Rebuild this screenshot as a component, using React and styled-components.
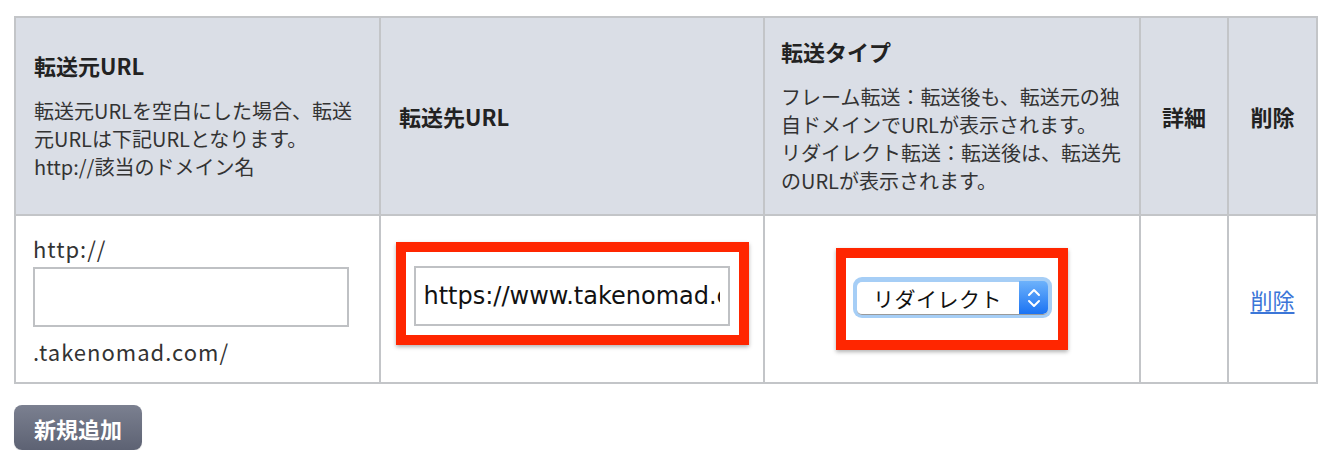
import React from 'react';
import styled, { createGlobalStyle } from 'styled-components';

const GlobalStyle = createGlobalStyle`
  body {
    margin: 0;
    background: #ffffff;
    font-family: "Noto Sans CJK JP", "Noto Sans", sans-serif;
    color: #333333;
  }
`;

const Page = styled.div`
  padding: 16px 14px 0 14px;
`;

const Table = styled.table`
  width: 1304px;
  border-collapse: collapse;
  table-layout: fixed;
  border: 2px solid #c3c5c8;
`;

const Col = styled.col`
  width: ${p => p.$w}px;
`;

const Th = styled.th`
  height: 196px;
  background: #dadee6;
  border: 2px solid #c3c5c8;
  padding: ${p => p.$pad || '0 16px 0 18px'};
  text-align: ${p => p.$align || 'left'};
  vertical-align: middle;
  font-weight: normal;
`;

const Title = styled.div`
  font-size: 22px;
  font-weight: bold;
  color: #222;
  line-height: 28px;
`;

const Desc = styled.div`
  margin-top: 18px;
  font-size: 20px;
  line-height: 28px;
  color: #333;
`;

const Td = styled.td`
  height: 166px;
  border: 2px solid #c3c5c8;
  padding: ${p => p.$pad || '0 17px'};
  vertical-align: middle;
  text-align: ${p => p.$align || 'left'};
  font-size: 22px;
  letter-spacing: 1px;
  color: #333;
`;

const Line = styled.div`
  line-height: 30px;
`;

const TextInput = styled.input`
  display: block;
  box-sizing: border-box;
  width: ${p => p.$w}px;
  height: 60px;
  margin: ${p => p.$m || '0'};
  border: 2px solid #bfc1c4;
  padding: 0 8px;
  font-family: "DejaVu Sans", Verdana, sans-serif;
  font-size: 24px;
  letter-spacing: 0;
  color: #111;
  background: #fff;
  outline: none;
`;

const Callout = styled.div`
  box-sizing: border-box;
  width: ${p => p.$w}px;
  height: ${p => p.$h}px;
  margin: 0 auto ${p => p.$mb || 0}px auto;
  border: 10px solid #ff2600;
  background: #fff;
  box-shadow: 0 2px 4px rgba(0, 0, 0, 0.3);
  padding: ${p => p.$pad};
`;

const SelectWrap = styled.div`
  position: relative;
  box-sizing: border-box;
  width: 199px;
  height: 41px;
  border-radius: 9px;
  background: #a6cef6;
  padding: 4px;
`;

const NativeSelect = styled.select`
  appearance: none;
  -webkit-appearance: none;
  box-sizing: border-box;
  width: 100%;
  height: 100%;
  border: none;
  border-bottom: 1px solid #9a9a9a;
  border-radius: 5px;
  background: #fff;
  padding: 0 0 0 16px;
  font-family: "Noto Sans CJK JP", sans-serif;
  font-size: 21px;
  letter-spacing: 0.5px;
  color: #111;
  outline: none;
`;

const Arrow = styled.span`
  position: absolute;
  top: 4px;
  right: 4px;
  bottom: 4px;
  width: 29px;
  border-radius: 0 5px 5px 0;
  background: linear-gradient(#6db2fb, #1b73f3);
  display: flex;
  align-items: center;
  justify-content: center;
`;

const DeleteLink = styled.a`
  color: #3b76d8;
  font-size: 22px;
  letter-spacing: 0;
  text-decoration: underline;
  text-underline-offset: 3px;
`;

const AddButton = styled.button`
  margin-top: 21px;
  width: 128px;
  height: 45px;
  border: none;
  border-radius: 8px;
  background: linear-gradient(#7b8090, #5d6273);
  color: #fff;
  font-family: "Noto Sans CJK JP", sans-serif;
  font-size: 22px;
  font-weight: bold;
  box-shadow: 0 1px 1px rgba(0, 0, 0, 0.15);
`;

export default function App() {
  return (
    <>
      <GlobalStyle />
      <Page>
        <Table>
          <colgroup>
            <Col $w={365} />
            <Col $w={384} />
            <Col $w={376} />
            <Col $w={88} />
            <Col $w={89} />
          </colgroup>
          <thead>
            <tr>
              <Th>
                <Title>転送元URL</Title>
                <Desc>
                  転送元URLを空白にした場合、転送元URLは下記URLとなります。<br />
                  http://該当のドメイン名
                </Desc>
              </Th>
              <Th>
                <Title>転送先URL</Title>
              </Th>
              <Th $pad="0 10px 0 16px">
                <Title>転送タイプ</Title>
                <Desc>
                  フレーム転送：転送後も、転送元の独自ドメインでURLが表示されます。<br />
                  リダイレクト転送：転送後は、転送先のURLが表示されます。
                </Desc>
              </Th>
              <Th $align="center" $pad="0">
                <Title>詳細</Title>
              </Th>
              <Th $align="center" $pad="0">
                <Title>削除</Title>
              </Th>
            </tr>
          </thead>
          <tbody>
            <tr>
              <Td>
                <Line>http://</Line>
                <TextInput $w={316} $m="4px 0 9px 0" />
                <Line>.takenomad.com/</Line>
              </Td>
              <Td $pad="0">
                <Callout $w={353} $h={103} $mb={12} $pad="14px 9px 9px 8px">
                  <TextInput $w={316} defaultValue="https://www.takenomad.com/" />
                </Callout>
              </Td>
              <Td $pad="0">
                <Callout $w={232} $h={102} $pad="19px 6px 0 7px">
                  <SelectWrap>
                    <NativeSelect defaultValue="redirect">
                      <option value="frame">フレーム</option>
                      <option value="redirect">リダイレクト</option>
                    </NativeSelect>
                    <Arrow>
                      <svg width="14" height="22" viewBox="0 0 14 22" fill="none" stroke="#fff" strokeWidth="2" strokeLinecap="round" strokeLinejoin="round">
                        <path d="M2 8 L7 3 L12 8" />
                        <path d="M2 14 L7 19 L12 14" />
                      </svg>
                    </Arrow>
                  </SelectWrap>
                </Callout>
              </Td>
              <Td />
              <Td $align="center" $pad="0">
                <DeleteLink href="#">削除</DeleteLink>
              </Td>
            </tr>
          </tbody>
        </Table>
        <AddButton>新規追加</AddButton>
      </Page>
    </>
  );
}
